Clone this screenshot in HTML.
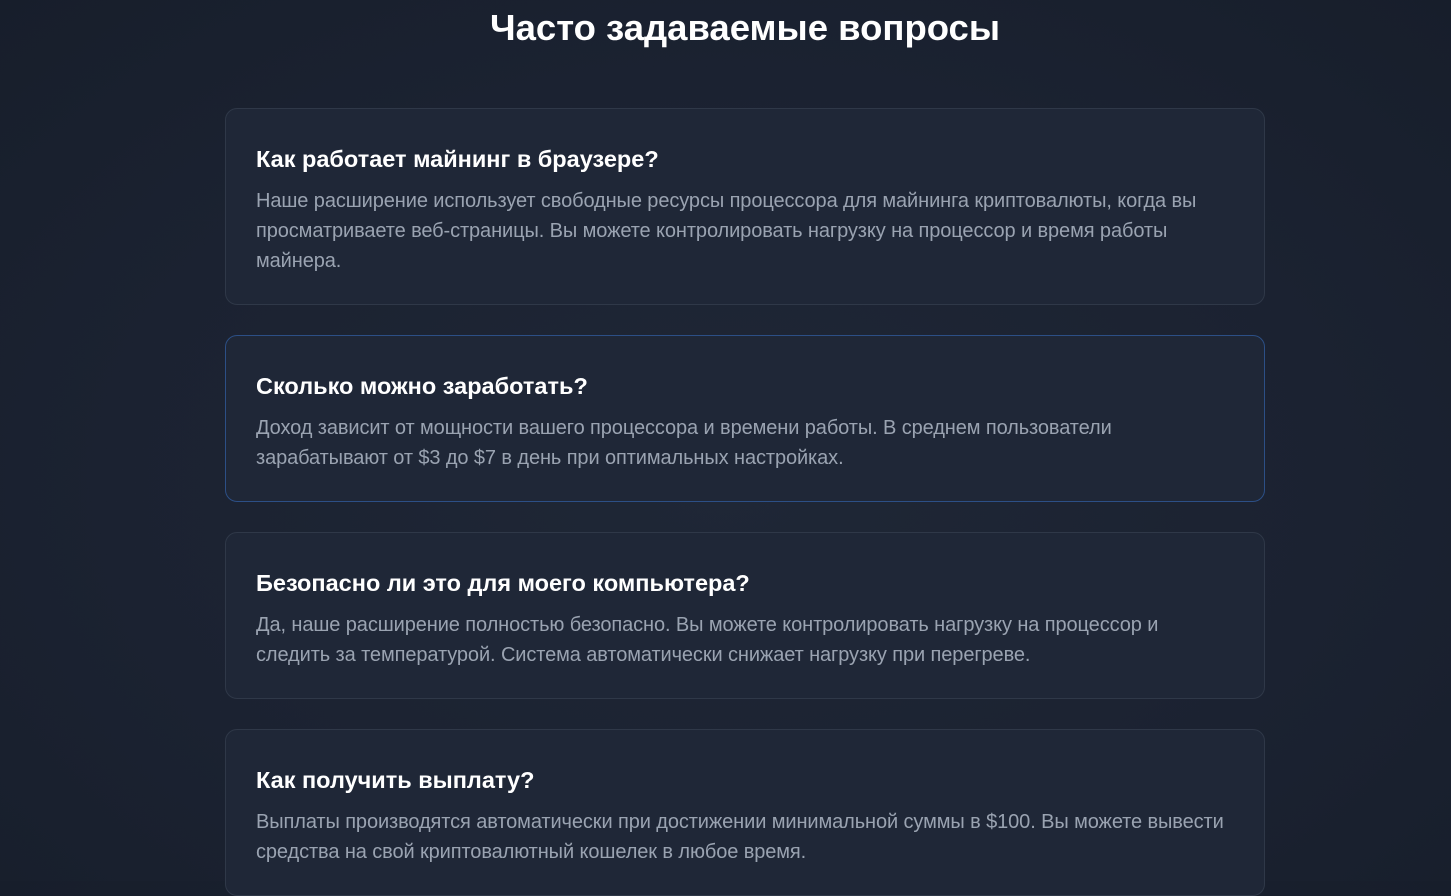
<!DOCTYPE html>
<html><head><meta charset="utf-8"><style>
html,body{margin:0;padding:0}
body{width:1451px;height:881px;overflow:hidden;background:radial-gradient(ellipse at 50% 55%,#1f2736 0%,#1b2231 60%,#171e2b 100%);font-family:"Liberation Sans",sans-serif;}
h1{margin:0;position:absolute;top:6px;left:0;width:1490px;text-align:center;color:#fff;font-size:36.5px;font-weight:bold;line-height:44px}
.card{position:absolute;left:225px;width:978px;padding:32px 30px 28px;background:#1f2737;border:1px solid #2f3848;border-radius:12px}
.card.act{border-color:#2c4f86}
h3{margin:0 0 9px;color:#fff;font-size:23.5px;font-weight:bold;line-height:36px}
p{margin:0;color:#9aa3b1;font-size:20px;line-height:30px;white-space:nowrap;letter-spacing:-0.1px}
</style></head><body>
<h1>Часто задаваемые вопросы</h1>
<div class="card" style="top:108px"><h3>Как работает майнинг в браузере?</h3><p>Наше расширение использует свободные ресурсы процессора для майнинга криптовалюты, когда вы<br>просматриваете веб-страницы. Вы можете контролировать нагрузку на процессор и время работы<br>майнера.</p></div>
<div class="card act" style="top:335px"><h3>Сколько можно заработать?</h3><p>Доход зависит от мощности вашего процессора и времени работы. В среднем пользователи<br>зарабатывают от $3 до $7 в день при оптимальных настройках.</p></div>
<div class="card" style="top:532px"><h3>Безопасно ли это для моего компьютера?</h3><p>Да, наше расширение полностью безопасно. Вы можете контролировать нагрузку на процессор и<br>следить за температурой. Система автоматически снижает нагрузку при перегреве.</p></div>
<div class="card" style="top:729px"><h3>Как получить выплату?</h3><p>Выплаты производятся автоматически при достижении минимальной суммы в $100. Вы можете вывести<br>средства на свой криптовалютный кошелек в любое время.</p></div>
</body></html>
